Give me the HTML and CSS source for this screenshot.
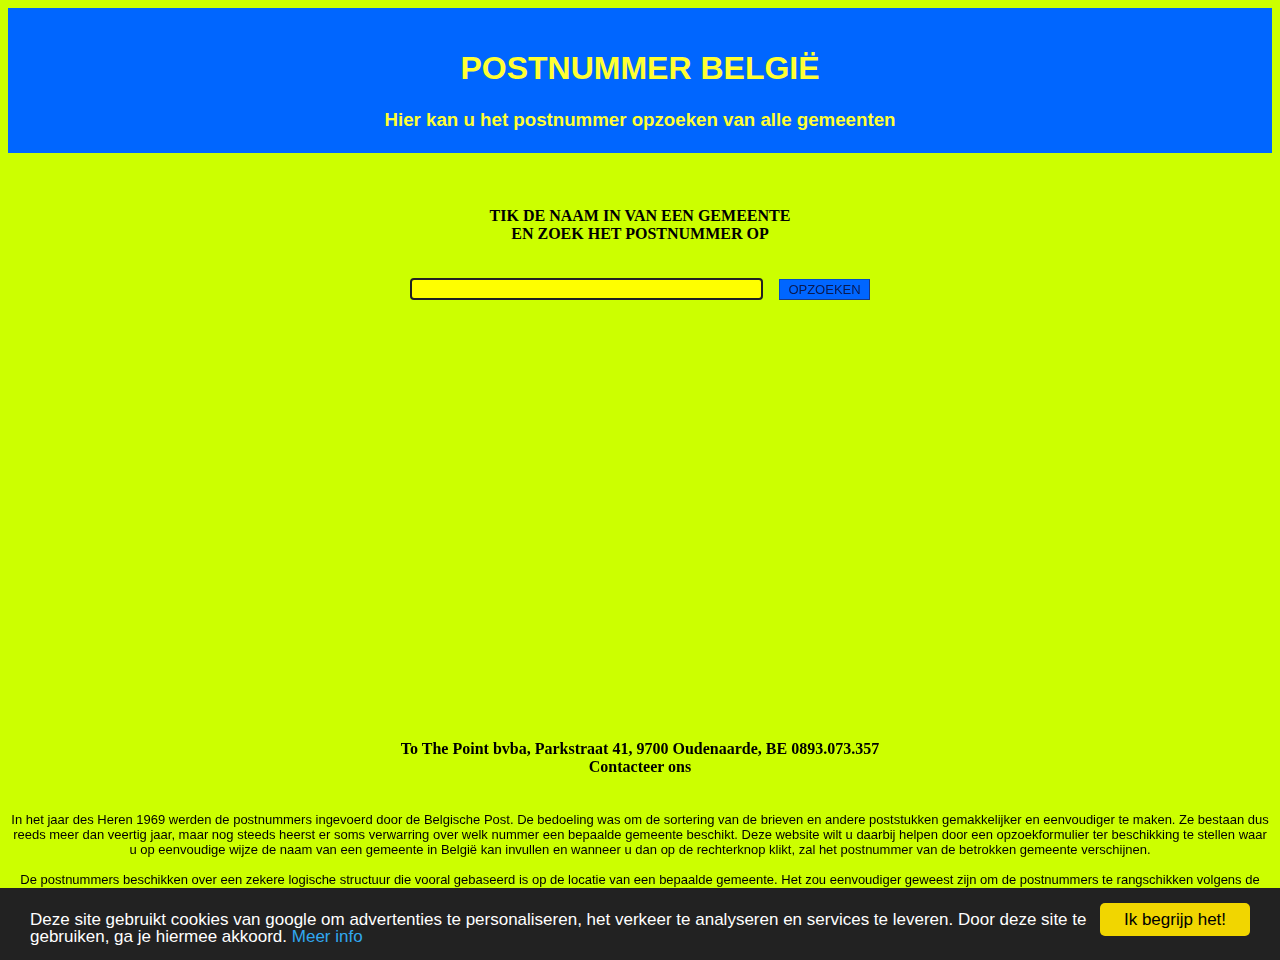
FILE: index.html
```html
<!DOCTYPE html>
<html lang="nl">
<head>
<meta charset="utf-8">
<title>Postnummer België</title>
<link rel="stylesheet" href="styles.css">
</head>
<body>
<header class="banner">
  <h1 class="title">POSTNUMMER BELGIË</h1>
  <h2 class="subtitle">Hier kan u het postnummer opzoeken van alle gemeenten</h2>
</header>

<main class="content">
  <p class="prompt">TIK DE NAAM IN VAN EEN GEMEENTE<br>EN ZOEK HET POSTNUMMER OP</p>
  <form class="search" onsubmit="return false;">
    <input class="search-input" type="text" autofocus>
    <button class="search-btn" type="submit">OPZOEKEN</button>
  </form>
  <div class="ad-slot"></div>
  <p class="address">To The Point bvba, Parkstraat 41, 9700 Oudenaarde, BE 0893.073.357<br>Contacteer ons</p>
  <div class="info">
    <p class="info-p">In het jaar des Heren 1969 werden de postnummers ingevoerd door de Belgische Post. De bedoeling was om de sortering van de brieven en andere poststukken gemakkelijker en eenvoudiger te maken. Ze bestaan dus reeds meer dan veertig jaar, maar nog steeds heerst er soms verwarring over welk nummer een bepaalde gemeente beschikt. Deze website wilt u daarbij helpen door een opzoekformulier ter beschikking te stellen waar u op eenvoudige wijze de naam van een gemeente in België kan invullen en wanneer u dan op de rechterknop klikt, zal het postnummer van de betrokken gemeente verschijnen.</p>
    <p class="info-p">De postnummers beschikken over een zekere logische structuur die vooral gebaseerd is op de locatie van een bepaalde gemeente. Het zou eenvoudiger geweest zijn om de postnummers te rangschikken volgens de alfabetische volgorde van de gemeenten, maar men heeft gekozen voor een indeling per provincie.</p>
  </div>
</main>

<div class="cookie-bar">
  <p class="cookie-msg">Deze site gebruikt cookies van google om advertenties te personaliseren, het verkeer te analyseren en services te leveren. Door deze site te gebruiken, ga je hiermee akkoord. <a class="cookie-link" href="#">Meer info</a></p>
  <button class="cookie-btn" type="button">Ik begrijp het!</button>
</div>
</body>
</html>
```

FILE: styles.css
```css
html, body {
  background: #ccff00;
}
body {
  margin: 8px;
  font-family: "Liberation Serif", "Times New Roman", serif;
  color: #000;
}
.banner {
  background: #0066ff;
  padding: 42px 0 22px;
  text-align: center;
  font-family: "Liberation Sans", Arial, sans-serif;
  color: #ffff33;
}
.title {
  margin: 0 0 22px;
  font-size: 32px;
  line-height: 37px;
  font-weight: bold;
}
.subtitle {
  margin: 0;
  font-size: 18.7px;
  line-height: 22px;
  font-weight: bold;
}
.content {
  text-align: center;
}
.prompt {
  margin: 54px 0 35px;
  font-size: 16px;
  line-height: 18px;
  font-weight: bold;
}
.search {
  display: flex;
  justify-content: center;
  align-items: flex-start;
  gap: 16px;
  margin: 0;
}
.search-input {
  box-sizing: border-box;
  width: 353px;
  height: 22px;
  margin: 0;
  padding: 0 3px;
  background: #ffff00;
  border: 2px solid #222;
  border-radius: 4px;
  outline: none;
  font-family: "Liberation Sans", Arial, sans-serif;
  font-size: 13px;
}
.search-btn {
  box-sizing: border-box;
  width: 91px;
  height: 21px;
  margin: 1px 0 0;
  padding: 0;
  background: #0066ff;
  border: 1px solid #0050c8;
  border-right-color: #1a3b80;
  border-bottom-color: #1a3b80;
  color: #0a1a50;
  font-family: "Liberation Sans", Arial, sans-serif;
  font-size: 13px;
}
.ad-slot {
  height: 440px;
}
.address {
  margin: 0;
  font-size: 16px;
  line-height: 18px;
  font-weight: bold;
}
.info {
  margin-top: 36px;
  padding: 0 3px;
  font-family: "Liberation Sans", Arial, sans-serif;
  font-size: 13px;
  line-height: 15px;
}
.info-p {
  margin: 0 0 15px;
}
.cookie-bar {
  position: fixed;
  left: 0;
  right: 0;
  bottom: 0;
  height: 72px;
  box-sizing: border-box;
  padding: 0 30px;
  background: #222;
  display: flex;
  align-items: center;
  gap: 10px;
  font-family: "Liberation Sans", Arial, sans-serif;
}
.cookie-msg {
  flex: 1;
  margin: 8px 0 0;
  color: #fff;
  font-size: 17px;
  line-height: 17px;
}
.cookie-link {
  color: #31a8f0;
  text-decoration: none;
}
.cookie-btn {
  flex: none;
  width: 150px;
  height: 33px;
  margin-top: -9px;
  padding: 0;
  background: #f1d600;
  border: none;
  border-radius: 5px;
  color: #000;
  font-family: "Liberation Sans", Arial, sans-serif;
  font-size: 17px;
}
```
